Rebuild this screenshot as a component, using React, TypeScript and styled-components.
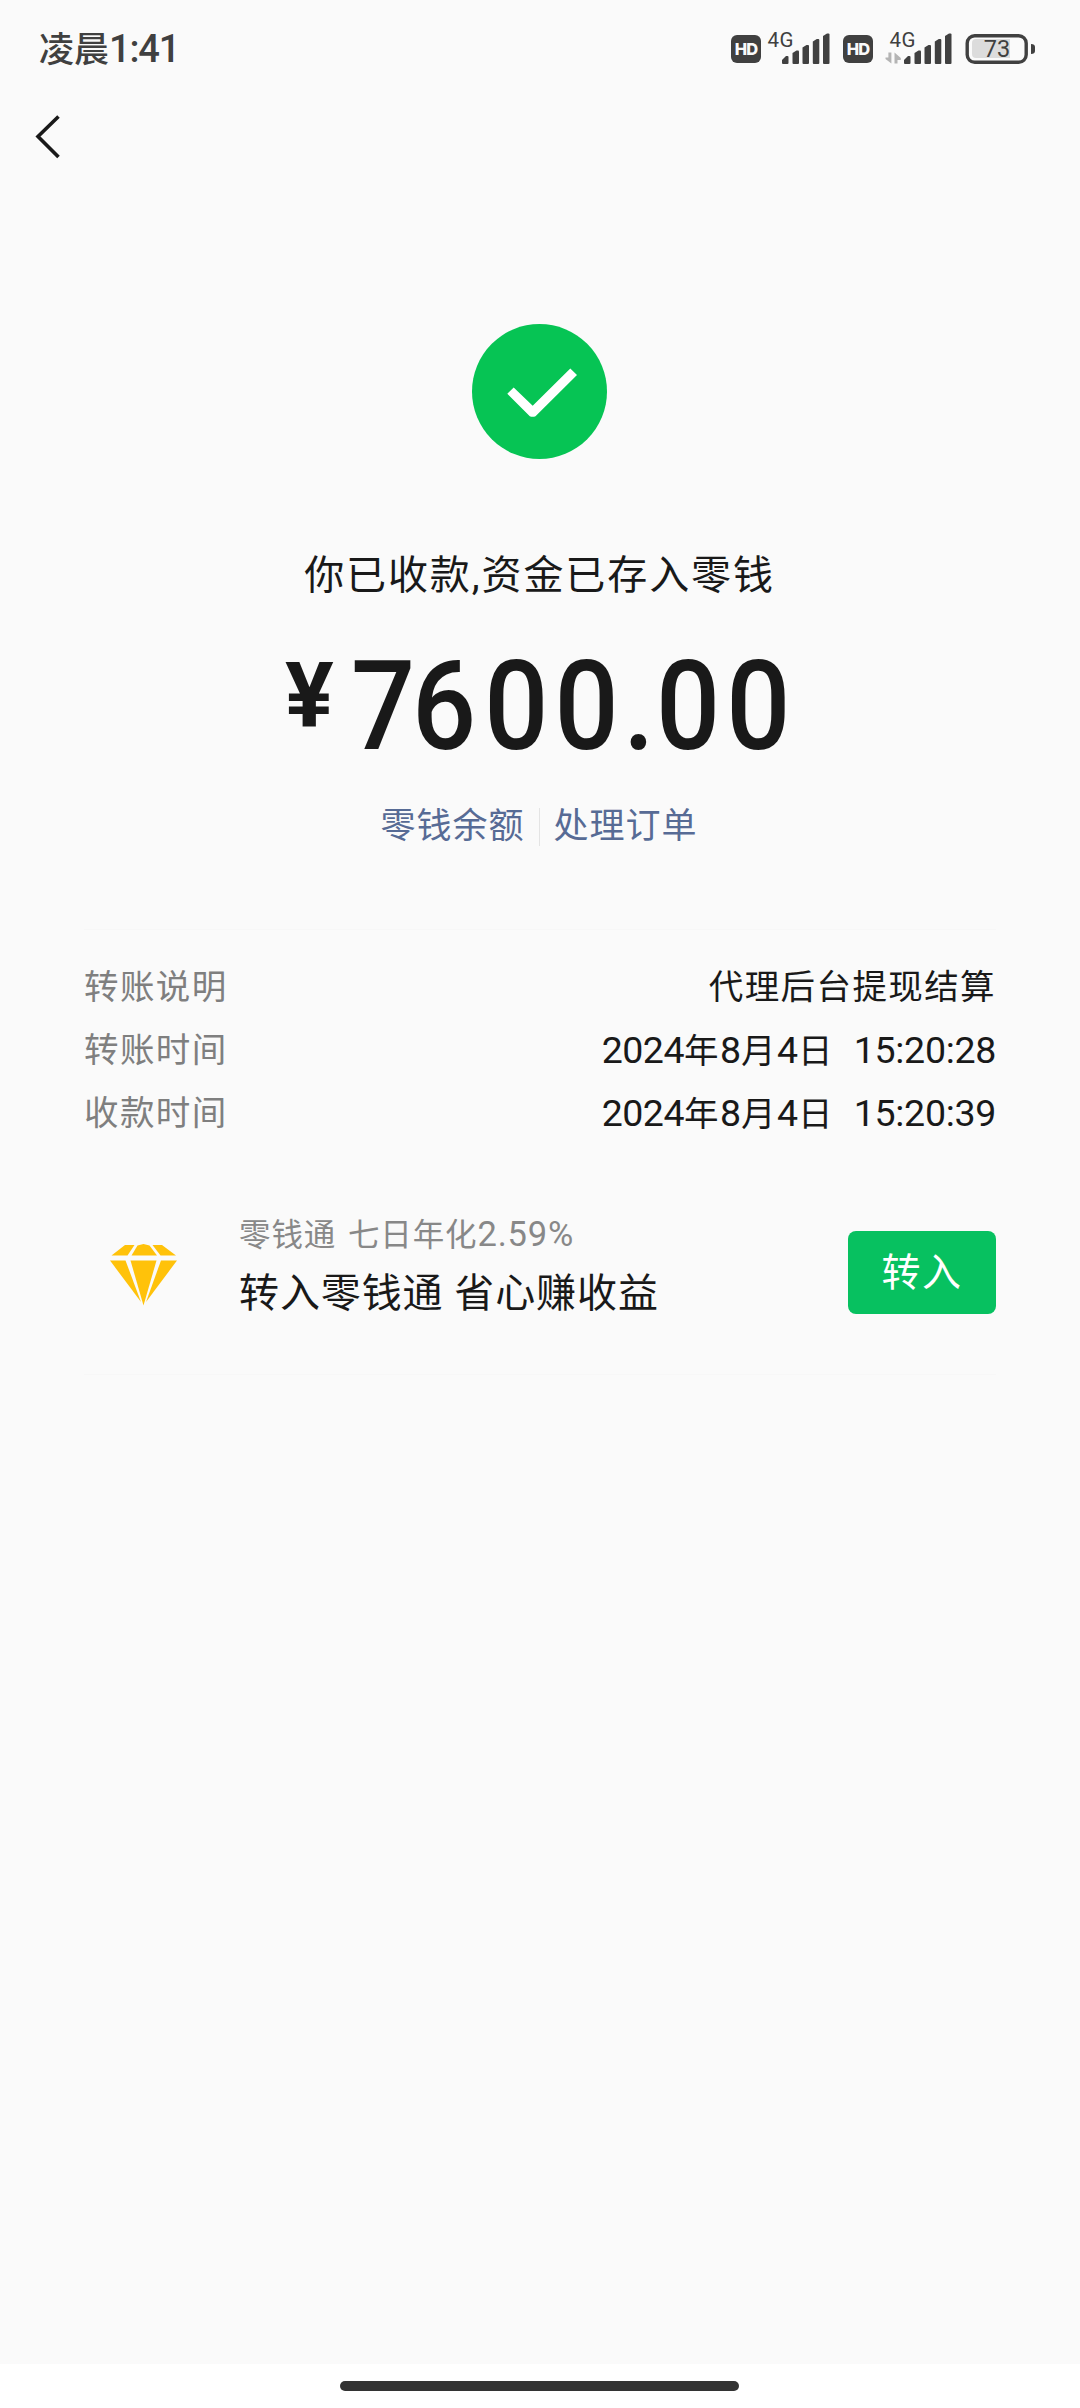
import React from "react";
import styled, { createGlobalStyle } from "styled-components";

const GlobalStyle = createGlobalStyle`
  * { box-sizing: border-box; }
  body {
    margin: 0;
    background: #fafafa;
    font-family: Roboto, "Noto Sans CJK SC", sans-serif;
    color: #191919;
  }
`;

const Page = styled.div`
  width: 1080px;
  height: 2408px;
  display: flex;
  flex-direction: column;
  background: #fafafa;
  overflow: hidden;
`;

const StatusBar = styled.header`
  height: 98px;
  padding: 0 45px 0 39px;
  display: flex;
  align-items: center;
  justify-content: space-between;
  color: #404040;
`;

const Clock = styled.div`
  padding-top: 2px;
  font-size: 35px;
  font-weight: 500;
  line-height: 60px;
  white-space: nowrap;
`;

const Num = styled.span<{ $size: number; $spacing?: number }>`
  font-size: ${(p) => p.$size}px;
  letter-spacing: ${(p) => p.$spacing ?? 0}px;
`;

const StatusIcons = styled.div`
  display: flex;
  align-items: center;
  height: 34px;
`;

const HdBadge = styled.div<{ $gap: number }>`
  width: 30px;
  height: 28px;
  margin-right: ${(p) => p.$gap}px;
  border-radius: 6px;
  background: #404040;
  color: #fafafa;
  font: 800 16.5px/29px Inter, sans-serif;
  letter-spacing: -0.8px;
  text-align: center;
`;

const Signal = styled.svg<{ $gap: number }>`
  display: block;
  width: 68px;
  height: 34px;
  margin-right: ${(p) => p.$gap}px;
  overflow: visible;
`;

const Battery = styled.svg`
  display: block;
  width: 70px;
  height: 34px;
`;

const NavBar = styled.nav`
  height: 80px;
  padding-left: 34px;
  display: flex;
  align-items: center;
`;

const BackButton = styled.button`
  display: block;
  width: 30px;
  height: 48px;
  padding: 0;
  border: 0;
  background: none;
`;

const Main = styled.main`
  flex: 1;
  padding: 146px 84px 0;
  display: flex;
  flex-direction: column;
`;

const SuccessMark = styled.svg`
  display: block;
  width: 136px;
  height: 136px;
  margin: 0 auto;
`;

const Headline = styled.h1`
  margin: 86px 1px 0 0;
  font-size: 40px;
  font-weight: 400;
  line-height: 60px;
  letter-spacing: 1.9px;
  text-align: center;
  white-space: nowrap;
`;

const Amount = styled.div`
  height: 140px;
  margin-top: 31px;
  padding-left: 201px;
  display: flex;
  font-weight: 500;
  line-height: 140px;
  white-space: nowrap;
`;

const Currency = styled.span`
  font-size: 91px;
  font-weight: 700;
  line-height: 118px;
  margin-right: 17px;
`;

const Figure = styled.span`
  display: block;
  font-size: 124px;
  transform: scaleX(0.91);
  transform-origin: left center;
`;

const Digit = styled.span<{ $spacing: number }>`
  letter-spacing: ${(p) => p.$spacing}px;
`;

const Links = styled.div`
  height: 40px;
  margin: 30px 2px 0 0;
  display: flex;
  justify-content: center;
  align-items: center;
  gap: 14px;
`;

const Link = styled.a`
  color: #576b95;
  font-size: 35px;
  line-height: 40px;
  letter-spacing: 1px;
  white-space: nowrap;
`;

const Separator = styled.span`
  width: 1px;
  height: 38px;
  background: #e4e4e4;
`;

const Details = styled.dl`
  margin: 82px 0 0;
  padding-top: 26px;
  border-top: 1px solid #f7f7f7;
`;

const DetailRow = styled.div`
  height: 63px;
  display: flex;
  justify-content: space-between;
  align-items: center;
  font-size: 34.5px;
  line-height: 63px;
  letter-spacing: 1.4px;
  white-space: pre;
`;

const Term = styled.dt`
  color: #7f7f7f;
`;

const Value = styled.dd`
  margin: 0;
`;

const Promo = styled.section`
  height: 230px;
  padding-top: 26px;
  display: flex;
  align-items: center;
  border-bottom: 1px solid #f7f7f7;
`;

const Diamond = styled.svg`
  display: block;
  width: 68px;
  height: 64px;
  margin: 7px 61px 0 26px;
`;

const PromoText = styled.div`
  flex: 1;
  margin-bottom: 10px;
  display: flex;
  flex-direction: column;
`;

const PromoRate = styled.div`
  color: #888;
  font-size: 31.5px;
  line-height: 46px;
  letter-spacing: 0.9px;
  word-spacing: 3px;
  white-space: nowrap;
`;

const PromoTitle = styled.div`
  margin-top: 5px;
  font-size: 40px;
  line-height: 60px;
  letter-spacing: 0.9px;
  white-space: nowrap;
`;

const TransferButton = styled.button`
  width: 148px;
  height: 83px;
  padding: 0;
  border: 0;
  border-radius: 8px;
  background: #07c160;
  color: #fff;
  font: 400 39px/60px Roboto, "Noto Sans CJK SC", sans-serif;
  letter-spacing: 1.5px;
`;

const HomeArea = styled.footer`
  height: 44px;
  padding: 17px 1px 0 0;
  background: #fff;
`;

const HomeIndicator = styled.div`
  width: 399px;
  height: 10px;
  margin: 0 auto;
  border-radius: 5px;
  background: #333;
`;

const bars = [
  { x: 18, top: 24 },
  { x: 28.5, top: 18.5 },
  { x: 38.5, top: 13 },
  { x: 48.8, top: 7 },
  { x: 59, top: 1.5 },
];

function SignalIcon({ data, gap }: { data?: boolean; gap: number }) {
  return (
    <Signal viewBox="0 0 68 34" $gap={gap}>
      <text x="3.5" y="14.5" fontSize="20.5" fontFamily="Roboto" textLength="26" fill="#404040">
        4G
      </text>
      {data && (
        <g fill="#b4b4b4">
          <path d="M5.400 20.500V31.500L-.5 27V25.500H2.400V20.500Z" />
          <path d="M8.500 31.500V20.500L14.800 26V28H11.500V31.500Z" />
        </g>
      )}
      {bars.map((b, i) => (
        <path
          key={b.x}
          d={`M${b.x} ${b.top + (i ? 2.5 : 4)}L${b.x + 4} ${b.top}H${b.x + 5.5}Q${b.x + 6.5} ${b.top} ${b.x + 6.5} ${b.top + 1}V31Q${b.x + 6.5} 32 ${b.x + 5.5} 32H${b.x + 1}Q${b.x} 32 ${b.x} 31Z`}
          fill="#404040"
        />
      ))}
    </Signal>
  );
}

const figure = [
  { char: "7", spacing: -3.5 },
  { char: "6", spacing: 9 },
  { char: "0", spacing: 6.8 },
  { char: "0", spacing: 5 },
  { char: ".", spacing: 1.5 },
  { char: "0", spacing: 6.8 },
  { char: "0", spacing: 0 },
];

const details = [
  { term: "转账时间", time: "15:20:28" },
  { term: "收款时间", time: "15:20:39" },
];

export default function App() {
  return (
    <Page>
      <GlobalStyle />
      <StatusBar>
        <Clock>
          凌晨<Num $size={38} $spacing={-1.2}>1:41</Num>
        </Clock>
        <StatusIcons>
          <HdBadge $gap={3}>HD</HdBadge>
          <SignalIcon gap={11} />
          <HdBadge $gap={13}>HD</HdBadge>
          <SignalIcon data gap={11} />
          <Battery viewBox="0 0 70 34">
            <rect x="2.200" y="3.700" width="59" height="26.600" rx="7.500" fill="none" stroke="#404040" strokeWidth="3.400" />
            <path d="M11 7H45V26H11Q7 26 7 22V11Q7 7 11 7Z" fill="#dcdcdc" />
            <path d="M66 12Q70 12 70 15V19Q70 22 66 22Z" fill="#404040" />
            <text x="32" y="25.300" fontSize="23.500" fontFamily="Roboto" textAnchor="middle" fill="#404040">
              73
            </text>
          </Battery>
        </StatusIcons>
      </StatusBar>
      <NavBar>
        <BackButton aria-label="返回">
          <svg width="30" height="48" viewBox="0 0 30 48" fill="none" stroke="#191919" strokeWidth="3.600">
            <path d="M24.500 2.500L4 22.500L24.500 43" />
          </svg>
        </BackButton>
      </NavBar>
      <Main>
        <SuccessMark viewBox="0 0 136 136">
          <circle cx="67.500" cy="67.500" r="67.500" fill="#06c454" />
          <path d="M35.300 69.700L41.700 63.500L60.700 81.700L98.300 44.500L105 51L63.500 92.300Q60.500 93.300 57.800 92.300Z" fill="#fff" />
        </SuccessMark>
        <Headline>你已收款,资金已存入零钱</Headline>
        <Amount>
          <Currency>¥</Currency>
          <Figure>
            {figure.map((d, i) => (
              <Digit key={i} $spacing={d.spacing}>{d.char}</Digit>
            ))}
          </Figure>
        </Amount>
        <Links>
          <Link>零钱余额</Link>
          <Separator />
          <Link>处理订单</Link>
        </Links>
        <Details>
          <DetailRow>
            <Term>转账说明</Term>
            <Value>代理后台提现结算</Value>
          </DetailRow>
          {details.map((d) => (
            <DetailRow key={d.term}>
              <Term>{d.term}</Term>
              <Value>
                <Num $size={37.5} $spacing={-0.5}>2024</Num>年<Num $size={37.5}>8</Num>月
                <Num $size={37.5}>4</Num>日{"  "}
                <Num $size={37.5} $spacing={-0.3}>{d.time}</Num>
              </Value>
            </DetailRow>
          ))}
        </Details>
        <Promo>
          <Diamond viewBox="0 0 68 64" fill="#ffc20a">
            <path d="M15 1H24.500L17.500 11.500H1.500Z" />
            <path d="M27.500 1.500L33.500 0L39.500 1.500L47 11.500H21.500Z" />
            <path d="M42.500 1H52L66 11.500H50.500Z" />
            <path d="M0 16.500H15.500L31 58Z" />
            <path d="M20.500 16.500H46.500L33.500 61.500Z" />
            <path d="M51 16.500H67L36 58Z" />
          </Diamond>
          <PromoText>
            <PromoRate>
              零钱通 七日年化<Num $size={34.5} $spacing={0.8}>2.59%</Num>
            </PromoRate>
            <PromoTitle>转入零钱通 省心赚收益</PromoTitle>
          </PromoText>
          <TransferButton>转入</TransferButton>
        </Promo>
      </Main>
      <HomeArea>
        <HomeIndicator />
      </HomeArea>
    </Page>
  );
}
